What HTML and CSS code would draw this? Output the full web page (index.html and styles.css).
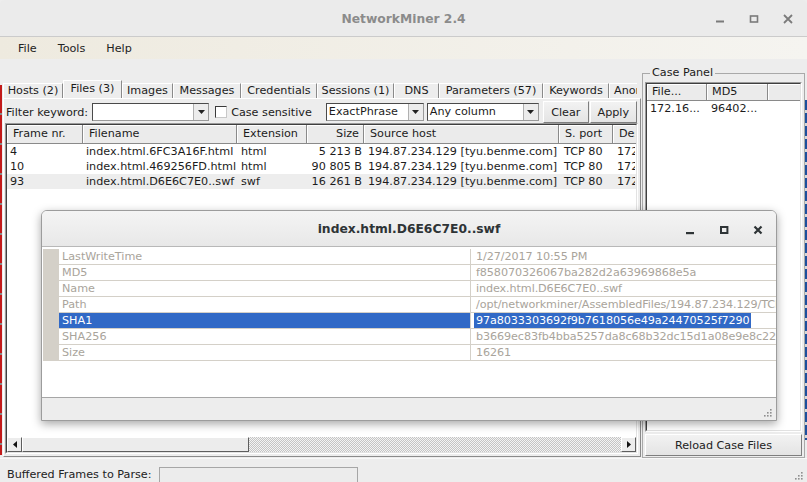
FILE: index.html
```html
<!DOCTYPE html>
<html>
<head>
<meta charset="utf-8">
<title>NetworkMiner 2.4</title>
<link rel="stylesheet" href="styles.css">
</head>
<body>
<div class="titlebar">
  <div></div>
  <div class="title">NetworkMiner 2.4</div>
  <div class="wctl">
    <span class="wbtn"><svg width="10" height="10" viewBox="0 0 10 10"><rect x="1" y="6.5" width="8" height="2" fill="#7b7b7b"/></svg></span>
    <span class="wbtn"><svg width="10" height="10" viewBox="0 0 10 10"><rect x="1.5" y="2" width="7" height="6" fill="none" stroke="#7b7b7b" stroke-width="1.6"/></svg></span>
    <span class="wbtn"><svg width="10" height="10" viewBox="0 0 10 10"><path d="M1 1L9 9M9 1L1 9" stroke="#7b7b7b" stroke-width="1.8"/></svg></span>
  </div>
</div>
<div class="menubar"><span>File</span><span>Tools</span><span>Help</span></div>
<div class="main">
  <div class="left">
    <div class="tabs">
      <div class="tab t1">Hosts (2)</div>
      <div class="tab t2 sel">Files (3)</div>
      <div class="tab t3">Images</div>
      <div class="tab t4">Messages</div>
      <div class="tab t5">Credentials</div>
      <div class="tab t6">Sessions (1)</div>
      <div class="tab t7">DNS</div>
      <div class="tab t8">Parameters (57)</div>
      <div class="tab t9">Keywords</div>
      <div class="tab t10">Anomalies</div>
    </div>
    <div class="panel">
      <div class="filter">
        <span class="flabel">Filter keyword:</span>
        <div class="combo c-kw"><span class="cv"></span><span class="carr"><svg width="7" height="4" viewBox="0 0 7 4"><path d="M0 0H7L3.5 4Z" fill="#222"/></svg></span></div>
        <span class="check"></span>
        <span class="clabel">Case sensitive</span>
        <div class="combo c-ex"><span class="cv">ExactPhrase</span><span class="carr"><svg width="7" height="4" viewBox="0 0 7 4"><path d="M0 0H7L3.5 4Z" fill="#222"/></svg></span></div>
        <div class="combo c-any"><span class="cv">Any column</span><span class="carr"><svg width="7" height="4" viewBox="0 0 7 4"><path d="M0 0H7L3.5 4Z" fill="#222"/></svg></span></div>
        <span class="btn b-clear">Clear</span>
        <span class="btn b-apply">Apply</span>
      </div>
      <div class="table">
        <div class="tinner">
          <div class="thead">
            <div class="th k1">Frame nr.</div>
            <div class="th k2">Filename</div>
            <div class="th k3">Extension</div>
            <div class="th k4 r">Size</div>
            <div class="th k5">Source host</div>
            <div class="th k6">S. port</div>
            <div class="th k7">Destination host</div>
          </div>
          <div class="rows">
            <div class="row">
              <div class="td k1">4</div><div class="td k2">index.html.6FC3A16F.html</div><div class="td k3">html</div><div class="td k4 r">5 213 B</div><div class="td k5">194.87.234.129 [tyu.benme.com]</div><div class="td k6">TCP 80</div><div class="td k7">172.16.4.193</div>
            </div>
            <div class="row">
              <div class="td k1">10</div><div class="td k2">index.html.469256FD.html</div><div class="td k3">html</div><div class="td k4 r">90 805 B</div><div class="td k5">194.87.234.129 [tyu.benme.com]</div><div class="td k6">TCP 80</div><div class="td k7">172.16.4.193</div>
            </div>
            <div class="row alt">
              <div class="td k1">93</div><div class="td k2">index.html.D6E6C7E0..swf</div><div class="td k3">swf</div><div class="td k4 r">16 261 B</div><div class="td k5">194.87.234.129 [tyu.benme.com]</div><div class="td k6">TCP 80</div><div class="td k7">172.16.4.193</div>
            </div>
          </div>
          <div class="hscroll">
            <span class="sbtn"><svg width="4" height="7" viewBox="0 0 4 7"><path d="M4 0V7L0 3.5Z" fill="#111"/></svg></span>
            <span class="thumb"></span>
            <span class="track"></span>
            <span class="sbtn"><svg width="4" height="7" viewBox="0 0 4 7"><path d="M0 0V7L4 3.5Z" fill="#111"/></svg></span>
          </div>
        </div>
      </div>
    </div>
  </div>
  <div class="case">
    <span class="legend">Case Panel</span>
    <div class="clist">
      <div class="clinner">
        <div class="chead">
          <div class="ch q1">File...</div>
          <div class="ch q2">MD5</div>
          <div class="ch q3"></div>
        </div>
        <div class="crow">
          <div class="cd q1">172.16...</div>
          <div class="cd q2">96402...</div>
        </div>
      </div>
    </div>
    <span class="btn reload">Reload Case Files</span>
  </div>
</div>
<div class="status">
  <span class="slabel">Buffered Frames to Parse:</span>
  <span class="sbox"></span>
  <span class="grip"><svg width="9" height="9" viewBox="0 0 9 9"><g fill="#8f8f8f"><rect x="7" y="1" width="1.6" height="1.6"/><rect x="4" y="4" width="1.6" height="1.6"/><rect x="7" y="4" width="1.6" height="1.6"/><rect x="1" y="7" width="1.6" height="1.6"/><rect x="4" y="7" width="1.6" height="1.6"/><rect x="7" y="7" width="1.6" height="1.6"/></g></svg></span>
</div>

<div class="dialog">
  <div class="dtitle">
    <div></div>
    <div class="dtext">index.html.D6E6C7E0..swf</div>
    <div class="dctl">
      <span class="dbtn"><svg width="10" height="10" viewBox="0 0 10 10"><rect x="1" y="7" width="8" height="2.2" fill="#2e3436"/></svg></span>
      <span class="dbtn"><svg width="10" height="10" viewBox="0 0 10 10"><rect x="2" y="2" width="6.4" height="6" fill="none" stroke="#2e3436" stroke-width="2"/></svg></span>
      <span class="dbtn"><svg width="10" height="10" viewBox="0 0 10 10"><path d="M1.5 1.5L8.5 8.5M8.5 1.5L1.5 8.5" stroke="#2e3436" stroke-width="2.2"/></svg></span>
    </div>
  </div>
  <div class="dbody">
    <div class="grid">
      <div class="gut"></div><div class="gn">LastWriteTime</div><div class="gv"><span class="vt">1/27/2017 10:55 PM</span></div>
      <div class="gut"></div><div class="gn">MD5</div><div class="gv"><span class="vt">f858070326067ba282d2a63969868e5a</span></div>
      <div class="gut"></div><div class="gn">Name</div><div class="gv"><span class="vt">index.html.D6E6C7E0..swf</span></div>
      <div class="gut"></div><div class="gn">Path</div><div class="gv"><span class="vt">/opt/networkminer/AssembledFiles/194.87.234.129/TCP-80/index.html.D6E6C7E0..swf</span></div>
      <div class="gut"></div><div class="gn sel">SHA1</div><div class="gv"><span class="vt hl">97a8033303692f9b7618056e49a24470525f7290</span></div>
      <div class="gut"></div><div class="gn">SHA256</div><div class="gv"><span class="vt">b3669ec83fb4bba5257da8c68b32dc15d1a08e9e8c22a1f3</span></div>
      <div class="gut"></div><div class="gn">Size</div><div class="gv"><span class="vt">16261</span></div>
    </div>
  </div>
  <div class="dfoot">
    <span class="dgrip"><svg width="9" height="9" viewBox="0 0 9 9"><g fill="#8f8f8f"><rect x="7" y="1" width="1.6" height="1.6"/><rect x="4" y="4" width="1.6" height="1.6"/><rect x="7" y="4" width="1.6" height="1.6"/><rect x="1" y="7" width="1.6" height="1.6"/><rect x="4" y="7" width="1.6" height="1.6"/><rect x="7" y="7" width="1.6" height="1.6"/></g></svg></span>
  </div>
</div>
</body>
</html>
```
FILE: styles.css
```css
* { box-sizing: border-box; }
html, body { margin: 0; padding: 0; }
body {
  width: 807px;
  height: 482px;
  overflow: hidden;
  position: relative;
  background: #ededed;
  font-family: "DejaVu Sans", sans-serif;
  font-size: 11.2px;
  line-height: 13px;
  color: #1c1c1c;
}
svg { display: block; }

/* ---------- main window title ---------- */
.titlebar {
  height: 37px;
  display: grid;
  grid-template-columns: 1fr auto 1fr;
  align-items: center;
  padding: 2px 2px 0 2px;
  background: #ebebeb;
  border-bottom: 1px solid #cbcbcb;
  border-radius: 5px 5px 0 0;
}
.title { font-weight: bold; font-size: 12.3px; color: #8b8b8b; }
.wctl { display: flex; justify-content: flex-end; }
.wbtn { width: 34px; height: 20px; display: flex; align-items: center; justify-content: center; }

/* ---------- menu ---------- */
.menubar {
  height: 22px;
  display: flex;
  align-items: center;
  gap: 21px;
  padding-left: 18px;
  background: linear-gradient(to right, #eeeadf, #f5f4f0);
  color: #222;
}

/* ---------- body ---------- */
.main {
  height: 399px;
  display: flex;
  align-items: flex-start;
  background:
    repeating-linear-gradient(#c21a1a 0 28px, #8a8a8a 28px 30px) 0 26px / 2px 370px no-repeat,
    repeating-linear-gradient(#1d4f9c 0 10px, #d8d8d8 10px 13px) 805px 41px / 2px 340px no-repeat,
    #ededed;
}
.left { margin: 21px 0 0 3px; width: 638px; }

.tabs { display: flex; align-items: flex-end; height: 18px; overflow: hidden; width: 637px; }
.tab {
  flex: none;
  height: 15px;
  line-height: 14px;
  text-align: center;
  white-space: nowrap;
  overflow: hidden;
  border-top: 1px solid #fff;
  border-left: 1px solid #fff;
  border-right: 1px solid #8a8a8a;
  color: #1c1c1c;
}
.tab.sel {
  height: 19px;
  line-height: 16px;
  margin-bottom: -1px;
  position: relative;
  z-index: 1;
  background: #ededed;
  padding-bottom: 1px;
}
.t1 { width: 60px; }
.t2 { width: 59px; }
.t3 { width: 51px; }
.t4 { width: 68px; }
.t5 { width: 76px; }
.t6 { width: 77px; }
.t7 { width: 45px; }
.t8 { width: 104px; }
.t9 { width: 66px; }
.t10 { width: 28px; text-align: left; padding-left: 4px; border-right: none; text-overflow: clip; }

.panel {
  height: 359px;
  border: 1px solid;
  border-color: #fff #8a8a8a #8a8a8a #fff;
  padding: 2px 2px 2px 1px;
}

/* ---------- filter row ---------- */
.filter { display: flex; align-items: center; height: 22px; }
.flabel { margin-left: 1px; }
.combo {
  height: 18px;
  display: flex;
  background: #fff;
  border: 1px solid;
  border-color: #4a4a4a #9a9a9a #9a9a9a #4a4a4a;
}
.cv { flex: 1; padding-left: 2px; line-height: 15px; white-space: nowrap; overflow: hidden; }
.carr {
  width: 15px;
  flex: none;
  display: flex;
  align-items: center;
  justify-content: center;
  background: #ececec;
  border-left: 1px solid #b0b0b0;
}
.c-kw { width: 117px; margin-left: 4px; }
.c-ex { width: 98px; margin-left: 14px; }
.c-any { width: 112px; margin-left: 3px; }
.check {
  width: 12px;
  height: 12px;
  margin-left: 6px;
  background: #fff;
  border: 1px solid;
  border-color: #3a3a3a #c8c8c8 #c8c8c8 #3a3a3a;
}
.clabel { margin-left: 4px; }
.btn {
  display: flex;
  align-items: center;
  justify-content: center;
  height: 22px;
  background: linear-gradient(#f2f2f2, #e4e4e4);
  border: 1px solid;
  border-color: #fff #7e7e7e #7e7e7e #fff;
  color: #222;
}
.b-clear { width: 46px; margin-left: 4px; }
.b-apply { width: 47px; margin-left: 1px; }

/* ---------- table ---------- */
.table {
  height: 331px;
  border: 1px solid;
  border-color: #9a9a9a #fff #fff #9a9a9a;
}
.tinner {
  height: 100%;
  display: flex;
  flex-direction: column;
  overflow: hidden;
  background: #fff;
  border: 1px solid;
  border-color: #3f3f3f #e2e2e2 #e2e2e2 #3f3f3f;
}
.thead {
  flex: none;
  display: flex;
  height: 19px;
  background: #ebebeb;
  border-bottom: 1px solid #8a8a8a;
}
.th {
  flex: none;
  line-height: 18px;
  padding-left: 6px;
  white-space: nowrap;
  overflow: hidden;
  border-right: 1px solid #8a8a8a;
  box-shadow: inset 1px 1px 0 #fff;
}
.th.r { text-align: right; padding-right: 4px; padding-left: 0; }
.rows { flex: 1; }
.row { display: flex; height: 15px; line-height: 15px; }
.row.alt { background: #ededed; }
.td { flex: none; padding-left: 3px; white-space: nowrap; overflow: hidden; }
.td.r { text-align: right; padding-left: 0; padding-right: 2px; }
.k1 { width: 76px; }
.k2 { width: 154px; }
.k3 { width: 70px; }
.k4 { width: 57px; }
.k5 { width: 195px; }
.k6 { width: 54px; }
.k7 { width: 22px; border-right: none; }
.row .k3 { padding-left: 4px; }
.row .k5 { padding-left: 4px; }
.row .k6 { padding-left: 5px; }
.row .k7 { padding-left: 4px; }

.hscroll { flex: none; height: 15px; display: flex; }
.sbtn {
  width: 15px;
  flex: none;
  display: flex;
  align-items: center;
  justify-content: center;
  background: #ececec;
  border: 1px solid;
  border-color: #fff #5e5e5e #5e5e5e #fff;
}
.thumb {
  width: 227px;
  flex: none;
  background: #ececec;
  border: 1px solid;
  border-color: #fff #5e5e5e #5e5e5e #fff;
}
.track {
  flex: 1;
  background: repeating-conic-gradient(#c4c4c4 0 25%, #f3f3f3 0 50%) 0 0 / 2px 2px;
}

/* ---------- case panel ---------- */
.case {
  margin: 14px 0 0 1px;
  width: 163px;
  height: 385px;
  display: flex;
  flex-direction: column;
  border: 1px solid #a9a9a9;
  padding: 0 2px 1px 2px;
}
.legend {
  align-self: flex-start;
  margin: -8px 0 3px 5px;
  padding: 0 2px;
  line-height: 13px;
  background: #ededed;
}
.clist {
  height: 350px;
  border: 1px solid;
  border-color: #9a9a9a #fff #fff #9a9a9a;
}
.clinner {
  height: 100%;
  background: #fff;
  border: 1px solid;
  border-color: #3f3f3f #e2e2e2 #e2e2e2 #3f3f3f;
}
.chead { display: flex; height: 17px; background: #ebebeb; border-bottom: 1px solid #8a8a8a; }
.ch {
  flex: none;
  line-height: 16px;
  padding-left: 5px;
  border-right: 1px solid #8a8a8a;
  box-shadow: inset 1px 1px 0 #fff;
}
.q1 { width: 60px; }
.q2 { width: 61px; }
.q3 { flex: 1; border-right: none; }
.crow { display: flex; height: 16px; line-height: 16px; }
.cd { flex: none; padding-left: 3px; white-space: nowrap; }
.crow .q2 { padding-left: 4px; }
.reload { margin-top: 2px; }

/* ---------- status ---------- */
.status {
  height: 24px;
  display: flex;
  align-items: flex-start;
  padding: 8px 0 0 7px;
  border-top: 1px solid #f8f8f8;
}
.slabel { line-height: 16px; color: #222; }
.sbox {
  width: 199px;
  height: 17px;
  margin-left: 8px;
  background: #ececec;
  border: 1px solid #a6a6a6;
}
.grip { margin-left: auto; align-self: flex-end; margin: 0 4px 2px auto; }

/* ---------- dialog window ---------- */
.dialog {
  position: absolute;
  left: 41px;
  top: 210px;
  width: 736px;
  height: 211px;
  display: flex;
  flex-direction: column;
  overflow: hidden;
  background: #fff;
  border: 1px solid #9c9c9c;
  border-radius: 6px 6px 0 0;
  box-shadow: 0 3px 10px rgba(0, 0, 0, 0.35);
}
.dtitle {
  flex: none;
  height: 36px;
  display: grid;
  grid-template-columns: 1fr auto 1fr;
  align-items: center;
  background: linear-gradient(#f4f4f4, #e8e8e8);
  border-bottom: 1px solid #b8b8b8;
  padding-top: 2px;
}
.dtext { font-weight: bold; font-size: 12.3px; color: #2e3436; }
.dctl { display: flex; justify-content: flex-end; padding-right: 1px; }
.dbtn { width: 34px; height: 20px; display: flex; align-items: center; justify-content: center; }

.dbody { flex: none; height: 150px; padding: 2px 0 0 1px; background: #fff; }
.grid { display: grid; grid-template-columns: 16px 412px 1fr; }
.gut { height: 16px; background: #d4d0c8; }
.gn, .gv {
  height: 16px;
  padding-top: 1px;
  line-height: 14px;
  border-bottom: 1px solid #d4d0c8;
  color: #a9a49b;
  white-space: nowrap;
  overflow: hidden;
}
.gn { padding-left: 3px; border-right: 1px solid #d4d0c8; }
.gn.sel { background: #3169c6; color: #fff; }
.gv { padding-left: 3px; }
.vt { padding: 0 1px 0 2px; display: inline-block; height: 15px; margin-top: -1px; line-height: 16px; letter-spacing: -0.1px; }
.vt.hl { background: #3169c6; color: #fff; }

.dfoot {
  flex: 1;
  display: flex;
  justify-content: flex-end;
  align-items: flex-end;
  background: #ededed;
  border-top: 1px solid #a6a6a6;
  padding: 0 4px 3px 0;
}
```
